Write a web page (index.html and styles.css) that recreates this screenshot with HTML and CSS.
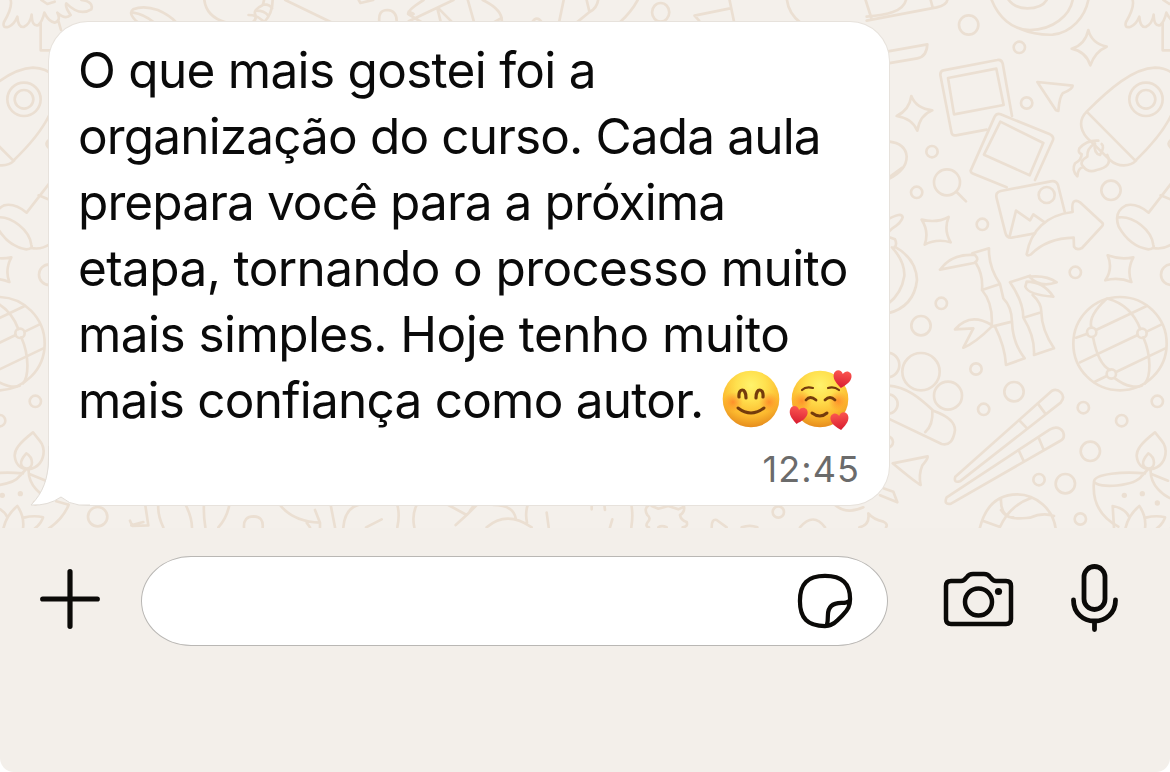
FILE: index.html
```
<!DOCTYPE html>
<html lang="pt-BR">
<head>
<meta charset="utf-8">
<title>Conversa</title>
<link rel="stylesheet" href="styles.css">
</head>
<body>
<div class="screen">
<main class="chat">
<svg class="wallpaper" width="1170" height="528" viewBox="0 0 1170 528" aria-hidden="true">
<g id="tile">
<g transform="translate(880 0) scale(.33333)">
<path d="M-40 50C20 45 70 35 78 0M-40 62L170 22Q200 15 202 0M152 0L158 22"/>
<circle cx="266" cy="75" r="29"/><circle cx="418" cy="142" r="17"/><circle cx="440" cy="309" r="17"/><circle cx="156" cy="455" r="17"/>
<path d="M335 0C355 50 395 90 450 90C520 90 570 45 578 0M386 0Q405 25 442 25Q485 25 500 0M420 86C460 103 490 105 518 104C575 98 615 50 625 0"/>
<path d="M625 90Q635 130 680 140Q645 155 631 196Q618 155 575 146Q615 135 625 90ZM94 288Q108 325 157 331Q120 345 112 392Q96 355 50 348Q88 330 94 288Z"/>
<path d="M24 154L142 133Q140 170 112 175L24 190"/>
<path d="M215 400L181 225Q180 214 190 211L352 180Q364 177 368 190L396 348M215 400Q218 408 228 406L320 389M204 234L349 206L371 315L222 343Z"/>
<path d="M272 512L344 350Q350 339 362 343L510 403Q522 409 519 420L465 540M272 512Q272 518 280 521L380 562M361 365L490 429L449 526L312 464Z"/>
<path d="M472 246L578 257Q578 267 548 280Q538 292 535 333L528 331Z"/>
<path d="M620 335C690 265 760 205 825 203Q865 204 890 230M874 345C850 395 810 440 766 482L620 335C590 365 605 400 630 422L690 480C715 503 750 500 768 482"/>
<circle cx="798" cy="298" r="50"/><circle cx="798" cy="298" r="28"/><path d="M880 415Q852 430 878 448"/>
<path d="M655 422Q620 420 598 445Q593 460 605 462Q605 480 585 490Q574 510 592 529Q593 505 610 500Q625 520 650 510Q700 500 682 465M610 500Q595 485 622 470Q620 445 645 430Q640 460 660 465Q675 440 665 432"/>
<path d="M758 0Q764 22 738 66Q732 86 752 80Q768 74 778 50Q780 83 797 81Q817 72 821 44Q822 80 840 76Q853 65 859 38Q872 65 890 68Q910 62 898 38Q922 60 938 45Q920 20 925 10Q965 50 1000 28Q1008 5 970 0M848 70V151H876M901 62L909 90M850 0L868 12L890 5"/>
<path d="M24 424Q78 430 80 470Q80 510 24 538"/>
</g>
<g transform="translate(880 170) scale(.33333)">
<circle cx="201" cy="37" r="39"/><path d="M230 66L258 94M24 24L65 -6"/><circle cx="110" cy="67" r="17"/><circle cx="307" cy="163" r="17"/><circle cx="586" cy="307" r="17"/><circle cx="184" cy="400" r="17"/><circle cx="123" cy="467" r="29"/><circle cx="693" cy="61" r="29"/><circle cx="874" cy="314" r="31"/>
<path d="M125 149Q170 160 206 141Q190 180 212 217Q170 205 134 224Q148 185 125 149ZM683 256Q720 270 760 262Q740 300 754 336Q715 320 676 331Q700 295 683 256Z"/>
<path d="M350 85Q345 67 362 63L512 34Q529 31 534 45L554 125M350 85L376 188Q380 205 395 203L465 190M388 203L408 122L450 151L460 133L494 157"/><circle cx="500" cy="75" r="24"/>
<path d="M440 253C452 180 500 135 578 126Q574 96 585 93Q592 91 600 97L668 160Q670 165 665 170L606 234Q590 242 582 230L581 203Q500 205 453 253Q442 259 440 253Z"/>
<path d="M820 234Q850 240 876 222M806 128L874 40M842 76L876 90M806 128Q770 98 738 106Q700 125 716 170Q750 230 805 238Q825 236 820 225C815 180 760 138 718 142"/>
<path d="M24 148Q65 125 68 142Q65 158 36 176L24 188M24 200L45 208Q52 222 44 232M36 232Q75 275 73 318Q65 370 24 402M44 230Q108 265 111 330Q102 410 24 430"/>
<path d="M180 299Q215 250 285 255Q300 270 282 279L180 299M277 250L327 235Q325 290 360 342L306 360Q310 315 288 280M306 360Q340 400 335 470L396 455Q395 410 370 385L360 342M335 470Q285 520 250 533L280 475L225 478Q270 425 335 465M345 470Q375 530 378 585L434 565Q398 520 396 455"/>
<path d="M450 317L390 337Q430 395 430 443L484 427Q485 400 458 375M430 443Q465 500 462 555L522 535Q485 480 484 427M448 320Q500 315 530 337Q480 355 448 320ZM440 335Q490 335 520 380Q445 375 436 350Z"/>
<circle cx="720" cy="521" r="140"/>
<path d="M588 503L622 491M648 480L800 408M600 577L773 495M800 485L845 463M643 636L680 618M708 606L856 535M680 386C637 425 628 450 634 472M639 501C650 560 670 590 690 600M705 625C740 652 770 653 785 647M684 386C735 400 765 435 781 477M790 502C815 560 812 620 795 640"/>
<circle cx="635" cy="487" r="14"/><circle cx="786" cy="490" r="14"/><circle cx="694" cy="612" r="14"/>
</g>
<g transform="translate(880 340) scale(.33333)">
<circle cx="123" cy="95" r="56"/><circle cx="204" cy="167" r="42"/><circle cx="21" cy="75" r="37"/><circle cx="24" cy="192" r="29"/><circle cx="22" cy="306" r="17"/><circle cx="288" cy="87" r="17"/><circle cx="311" cy="208" r="17"/><circle cx="402" cy="155" r="29"/><circle cx="610" cy="203" r="17"/><circle cx="725" cy="242" r="17"/><circle cx="832" cy="184" r="17"/><circle cx="631" cy="334" r="29"/><circle cx="477" cy="419" r="17"/><circle cx="556" cy="431" r="29"/><circle cx="601" cy="537" r="17"/><circle cx="1019" cy="530" r="29"/>
<path d="M24 137C80 140 120 175 160 212Q225 235 225 270Q218 320 185 312L24 235M157 210Q160 255 136 276"/>
<path d="M38 370L143 349Q145 355 127 376Q115 405 122 435Q110 430 38 370ZM10 445L40 455L52 487L0 466"/>
<path d="M226 410L515 153Q530 145 543 158Q556 172 542 188L240 424Q220 430 226 410ZM417 240L442 266M473 190L496 221"/>
<path d="M200 472L510 268Q535 255 549 275Q557 295 540 303L213 491Q190 495 200 472ZM417 333L430 361M475 291L490 327"/>
<path d="M299 566C315 500 350 463 412 463C470 463 520 510 527 566M308 542L360 561Q390 495 455 473M363 476C360 550 420 535 450 533C480 520 500 520 522 528M363 510Q380 535 400 532"/>
<path d="M825 277C780 312 770 330 770 347C772 372 787 387 810 388C842 385 857 360 857 333C856 308 842 300 825 277ZM805 340C782 365 786 382 805 386C828 385 827 353 805 340Z"/>
<path d="M795 400C730 395 643 400 642 425C655 448 765 438 785 408L802 390M642 425C636 485 660 530 715 560M812 390C810 435 850 470 885 480M814 402L864 422M932 494C920 525 895 550 872 566M895 484L932 494"/>
<path d="M702 563L698 498Q735 505 747 530M736 566Q745 525 778 498Q800 530 795 566M797 533Q830 525 855 532Q850 550 830 566"/>
<circle class="dot" cx="733" cy="466" r="8"/><circle class="dot" cx="787" cy="461" r="8"/><circle class="dot" cx="832" cy="489" r="8"/>
</g>
</g>
<use href="#tile" x="-1122"/>
<g transform="translate(80 490) scale(.33333)">
<path d="M150 92L157 108L205 106L195 40M154 106L190 96M235 40Q232 75 250 112M317 45Q335 80 336 112M372 40Q370 75 376 112M448 45Q440 85 415 112M492 112Q490 79 521 79Q551 80 548 112M600 45Q640 95 720 98L705 60M680 98L690 112M720 98V112M752 45L765 112M790 112Q795 55 835 45M858 112L905 88M952 45Q960 75 952 112M1010 45Q995 75 1003 112M1105 45L1160 75L1127 105M1160 75L1190 45"/>
</g>
<g transform="translate(470 490) scale(.33333)">
<path d="M0 62L10 48M70 45Q130 45 137 85M50 112Q110 60 185 112M173 45Q165 70 171 98M230 68L236 112M365 45V58M403 45L405 60M427 88L420 112M484 45Q490 75 484 112M537 45Q520 55 532 75Q545 85 532 98Q525 110 537 112M545 48L565 56L595 48L625 58L642 50Q645 66 630 75Q632 90 650 96Q655 110 638 112M565 112Q575 105 590 112M725 112Q725 85 740 90L770 112M815 112Q840 103 862 112M990 112Q1030 65 1065 112M1168 112Q1200 105 1195 70Q1210 88 1240 95Q1255 103 1248 112M1095 45Q1130 75 1180 52"/><circle cx="925" cy="66" r="17"/>
</g>
<g class="top-row" transform="scale(.574 .33333)">
<path d="M240 67Q222 40 232 28Q250 15 275 30Q295 45 307 67M232 38Q250 42 268 67M356 0C358 30 370 55 393 67M460 0L458 15Q440 30 445 45Q447 60 440 67M475 0Q475 40 460 67M458 13Q470 12 474 25M447 32Q460 32 467 46M433 45Q447 45 458 62M497 0L577 67M625 0L628 9L650 0M661 67Q658 30 675 30Q692 32 691 67M738 0Q710 30 711 42Q730 45 712 35M790 0L712 64M711 42L735 67M762 25L768 67M764 25L788 67M815 0L826 67M841 0Q877 30 874 67M874 54L860 67M927 67Q935 45 944 67M982 0L974 67M1022 0L1027 36L1005 67M1042 0Q1040 25 1027 36M1111 0Q1100 35 1080 67M1272 25L1210 47L1218 62M1271 0L1279 67M1371 0Q1374 40 1394 67M1508 0L1518 54"/>
<ellipse cx="1151" cy="37" rx="15" ry="28"/>
</g>
</svg>
<article class="bubble">
<svg class="tail" width="60" height="60" viewBox="0 0 60 60" aria-hidden="true"><path class="tail-fill" d="M19 0V12C19 32 13 47 1 59Q18 60 31 51Q39 58 49 59H60V0Z"/><path class="tail-edge" d="M18.5 0V12C18.5 32 13 47 1 59Q18 60 31 51Q39 58 49 59H60"/></svg>
<p class="message">
<span class="line l1">O que mais gostei foi a</span>
<span class="line l2">organização do curso. Cada aula</span>
<span class="line l3">prepara você para a próxima</span>
<span class="line l4">etapa, tornando o processo muito</span>
<span class="line l5">mais simples. Hoje tenho muito</span>
<span class="line l6">mais confiança como autor.</span>
</p>
<span class="emojis">
<svg width="134" height="66" viewBox="720 368 134 66" role="img" aria-label="Rosto sorridente e rosto apaixonado">
<defs>
<radialGradient id="face" cx=".5" cy=".26" r=".75"><stop offset="0" stop-color="#fff36c"/><stop offset=".35" stop-color="#ffe04e"/><stop offset=".72" stop-color="#fcba2f"/><stop offset="1" stop-color="#e58a1c"/></radialGradient>
<radialGradient id="blush"><stop offset="0" stop-color="#ff6a20" stop-opacity=".6"/><stop offset="1" stop-color="#ff7a20" stop-opacity="0"/></radialGradient>
<linearGradient id="red" x2="0" y2="1"><stop stop-color="#fb5650"/><stop offset="1" stop-color="#d81c30"/></linearGradient>
<path id="heart" d="M0 8C-4 5-9 1-9-4C-9-10-2-11 0-6C2-11 9-10 9-4C9 1 4 5 0 8Z"/>
</defs>
<circle cx="751" cy="399" r="28.3" fill="url(#face)"/><circle cx="733" cy="402" r="10" fill="url(#blush)"/><circle cx="769" cy="402" r="10" fill="url(#blush)"/>
<g class="features"><path d="M739 397C738 388 746 387 746 398M756 398C756 387 764 388 763 397" stroke-width="3.2"/><path d="M738 408Q751 418 764 408" stroke-width="2.9"/></g>
<circle cx="820" cy="399" r="28.3" fill="url(#face)"/><circle cx="802" cy="401" r="10" fill="url(#blush)"/><circle cx="838" cy="401" r="10" fill="url(#blush)"/>
<g class="features"><path d="M802 390Q806 386 813 388M828 388Q834 386 839 390" stroke-width="2.2"/><path d="M806 400Q810 395 816 400M825 400Q830 395 835 400" stroke-width="2.8"/><path d="M812 413Q820 419 827 413" stroke-width="3"/></g>
<g fill="url(#red)"><use href="#heart" transform="translate(842 380) rotate(8)"/><use href="#heart" transform="translate(798 416) rotate(10)"/><use href="#heart" transform="translate(840 422) rotate(-8)"/></g>
</svg>
</span>
<time class="time">12:45</time>
</article>
</main>
<footer class="composer">
<svg class="plus" width="60" height="60" viewBox="0 0 60 60"><path d="M30 2.7V57.3M2.7 30H57.3"/></svg>
<div class="field">
<svg class="sticker" width="54" height="54" viewBox="0 0 56 56"><path d="M28 54C10 54 2 46 2 28C2 10 10 2 28 2C46 2 54 10 54 26C54 33 52 37 46 43L41 48C37 52 34 54 28 54ZM30 53C31 49 31 47 31 43C31 34 36 30 45 30C49 30 51 30 53 28"/></svg>
</div>
<svg class="camera" width="70" height="56" viewBox="0 0 70 56"><path d="M7 9H17Q20 9 22 6L23 5Q25 2 29 2H40Q44 2 46 5L47 6Q49 9 52 9H62Q67 9 67 14V47Q67 52 62 52H7Q2 52 2 47V14Q2 9 7 9Z"/><circle cx="34.5" cy="30" r="13.5"/><circle class="camera-dot" cx="54.5" cy="19.5" r="3.6"/></svg>
<svg class="mic" width="48" height="70" viewBox="0 0 48 70"><rect x="13" y="2.5" width="21" height="43" rx="10.5"/><path d="M2.5 36C2.5 49 12 57 23.5 57C35 57 44.5 49 44.5 36M23.5 57V65.5"/></svg>
</footer>
</div>
</body>
</html>
```
FILE: styles.css
```
body { margin: 0; background: #fff; font-family: Inter, "Liberation Sans", sans-serif; }
.screen { display: flex; flex-direction: column; width: 1170px; height: 772px; overflow: hidden; border-radius: 0 0 14px 14px; background: #f3efea; }
.chat { position: relative; box-sizing: border-box; height: 528px; padding: 22px 0 0 49px; background: #f4f0eb; }
.wallpaper { position: absolute; inset: 0; fill: none; stroke: #ebdfd2; stroke-linecap: round; stroke-linejoin: round; }
.wallpaper g[transform] { stroke-width: 8; }
.wallpaper .top-row path, .wallpaper .top-row ellipse { stroke-width: 2.7; vector-effect: non-scaling-stroke; }
.wallpaper .dot { fill: #ebdfd2; stroke: none; }
.bubble { position: relative; box-sizing: border-box; width: 840px; height: 483px; padding: 15px 30px 0 29px; border-radius: 39px; background: #fff; box-shadow: 0 0 0 1px #e7e2dc; }
.tail { position: absolute; left: -19px; bottom: -1px; }
.tail-fill { fill: #fff; }
.tail-edge { fill: none; stroke: #e2ddd7; stroke-width: 1; }
.message { position: relative; margin: 0; color: #0a0a0a; font-size: 49.5px; line-height: 66px; }
.line { display: block; width: max-content; white-space: nowrap; }
.l1 { letter-spacing: -0.71px; }
.l2 { letter-spacing: -0.85px; }
.l3 { letter-spacing: -0.88px; }
.l4 { letter-spacing: -0.61px; }
.l5 { letter-spacing: -0.56px; }
.l6 { letter-spacing: -0.77px; }
.emojis { position: absolute; left: 671px; top: 346px; }
.emojis svg { display: block; }
.features { fill: none; stroke: #743b0c; stroke-linecap: round; }
.time { position: absolute; right: 29px; top: 425px; color: #6b6b6b; font-size: 36px; line-height: 44px; letter-spacing: 1.1px; }
.composer { display: flex; align-items: flex-start; height: 216px; padding: 28px 51px 0 40px; fill: none; stroke: #0b0a08; stroke-width: 4.5; stroke-linecap: round; stroke-linejoin: round; }
.composer svg { display: block; flex: none; overflow: visible; }
.plus { margin: 13px 41px 0 0; stroke-width: 5.2; }
.field { box-sizing: border-box; display: flex; align-items: center; justify-content: flex-end; width: 747px; height: 90px; padding-right: 35px; border: 1px solid #b9b7b4; border-radius: 50px / 45px; background: #fff; }
.sticker { stroke-width: 4.4; }
.camera { margin: 16px 57px 0 56px; }
.camera-dot { fill: #0b0a08; stroke: none; }
.mic { margin-top: 8px; stroke-width: 4.8; }
```
